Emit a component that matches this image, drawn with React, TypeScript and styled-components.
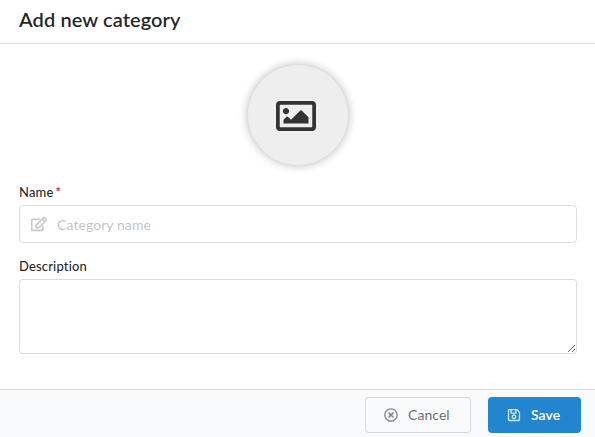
import React from "react";
import styled, { createGlobalStyle } from "styled-components";
import { FaRegEdit, FaRegImage, FaRegSave, FaRegTimesCircle } from "react-icons/fa";

const GlobalStyle = createGlobalStyle`
  *, *::before, *::after { box-sizing: border-box; }
  body {
    margin: 0;
    background: #fff;
    color: rgba(0, 0, 0, 0.87);
    font-family: Lato, "Liberation Sans", sans-serif;
    font-size: 14px;
    font-variant-ligatures: none;
    overflow: hidden;
  }
`;

const Modal = styled.form`
  display: flex;
  flex-direction: column;
  height: 437px;
`;

const Header = styled.header`
  flex: none;
  height: 44px;
  padding: 6px 19px 0;
  border-bottom: 1px solid rgba(34, 36, 38, 0.15);
`;

const Title = styled.h1`
  margin: 0;
  font-size: 20px;
  line-height: 26px;
  font-weight: 600;
  letter-spacing: 0.09px;
`;

const Content = styled.main`
  flex: 1;
  display: flex;
  flex-direction: column;
  padding: 21px 18px 0 19px;
`;

const ImagePicker = styled.button`
  flex: none;
  display: flex;
  align-items: center;
  justify-content: center;
  align-self: center;
  width: 100px;
  height: 100px;
  margin: 0 0 19px;
  padding: 2px 4px 0 0;
  border: 0;
  border-radius: 50%;
  background: #eee;
  color: #333;
  box-shadow: 0 0 10px rgba(0, 0, 0, 0.3);
  font-size: 40px;
`;

const Field = styled.div`
  margin-bottom: 15px;
`;

const Label = styled.label`
  display: block;
  height: 17px;
  margin-bottom: 4px;
  font-size: 13px;
  line-height: 17px;
  font-weight: 500;
  letter-spacing: 0.16px;
`;

const Required = styled.span`
  margin-left: 2px;
  color: #db2828;
  font-weight: 700;
`;

const InputBox = styled.div`
  display: flex;
  align-items: center;
  height: 38px;
  padding-left: 11px;
  border: 1px solid rgba(34, 36, 38, 0.15);
  border-radius: 4px;

  svg {
    flex: none;
    color: #c8c8c8;
    font-size: 16px;
    stroke: currentColor;
    stroke-width: 14px;
  }
`;

const Input = styled.input`
  flex: 1;
  min-width: 0;
  margin-left: 10px;
  padding: 0;
  border: 0;
  outline: 0;
  background: transparent;
  font: 400 14px/17px Lato, "Liberation Sans", sans-serif;
  letter-spacing: 0.08px;
  color: inherit;

  &::placeholder { color: rgba(191, 191, 191, 0.95); }
`;

const TextArea = styled.textarea`
  display: block;
  width: 100%;
  height: 75px;
  padding: 11px 14px;
  border: 1px solid rgba(34, 36, 38, 0.15);
  border-radius: 4px;
  outline: 0;
  resize: vertical;
  font: 400 14px/18px Lato, "Liberation Sans", sans-serif;
`;

const Actions = styled.footer`
  flex: none;
  display: flex;
  justify-content: flex-end;
  gap: 17px;
  height: 48px;
  padding: 7px 14px 0;
  border-top: 1px solid rgba(34, 36, 38, 0.15);
  background: #f9fafb;
`;

const Button = styled.button<{ $primary?: boolean }>`
  display: flex;
  align-items: center;
  gap: 10px;
  width: ${(p) => (p.$primary ? "93px" : "106px")};
  height: 36px;
  padding: 0 0 0 19px;
  border: 0;
  border-radius: 4px;
  background: ${(p) => (p.$primary ? "#2185d0" : "transparent")};
  box-shadow: ${(p) => (p.$primary ? "none" : "inset 0 0 0 1px rgba(34, 36, 38, 0.15)")};
  color: ${(p) => (p.$primary ? "#fff" : "rgba(0, 0, 0, 0.6)")};
  font: ${(p) => (p.$primary ? 600 : 400)} 14px/14px Lato, "Liberation Sans", sans-serif;
  letter-spacing: 0.06px;

  svg {
    flex: none;
    font-size: 14px;
    opacity: 0.8;
  }
`;

export default function App() {
  return (
    <>
      <GlobalStyle />
      <Modal onSubmit={(e) => e.preventDefault()}>
        <Header>
          <Title>Add new category</Title>
        </Header>
        <Content>
          <ImagePicker type="button" aria-label="Choose image">
            <FaRegImage />
          </ImagePicker>
          <Field>
            <Label htmlFor="name">
              Name<Required>*</Required>
            </Label>
            <InputBox>
              <FaRegEdit />
              <Input id="name" placeholder="Category name" />
            </InputBox>
          </Field>
          <Field>
            <Label htmlFor="description">Description</Label>
            <TextArea id="description" />
          </Field>
        </Content>
        <Actions>
          <Button type="button">
            <FaRegTimesCircle />
            Cancel
          </Button>
          <Button type="submit" $primary>
            <FaRegSave />
            Save
          </Button>
        </Actions>
      </Modal>
    </>
  );
}
